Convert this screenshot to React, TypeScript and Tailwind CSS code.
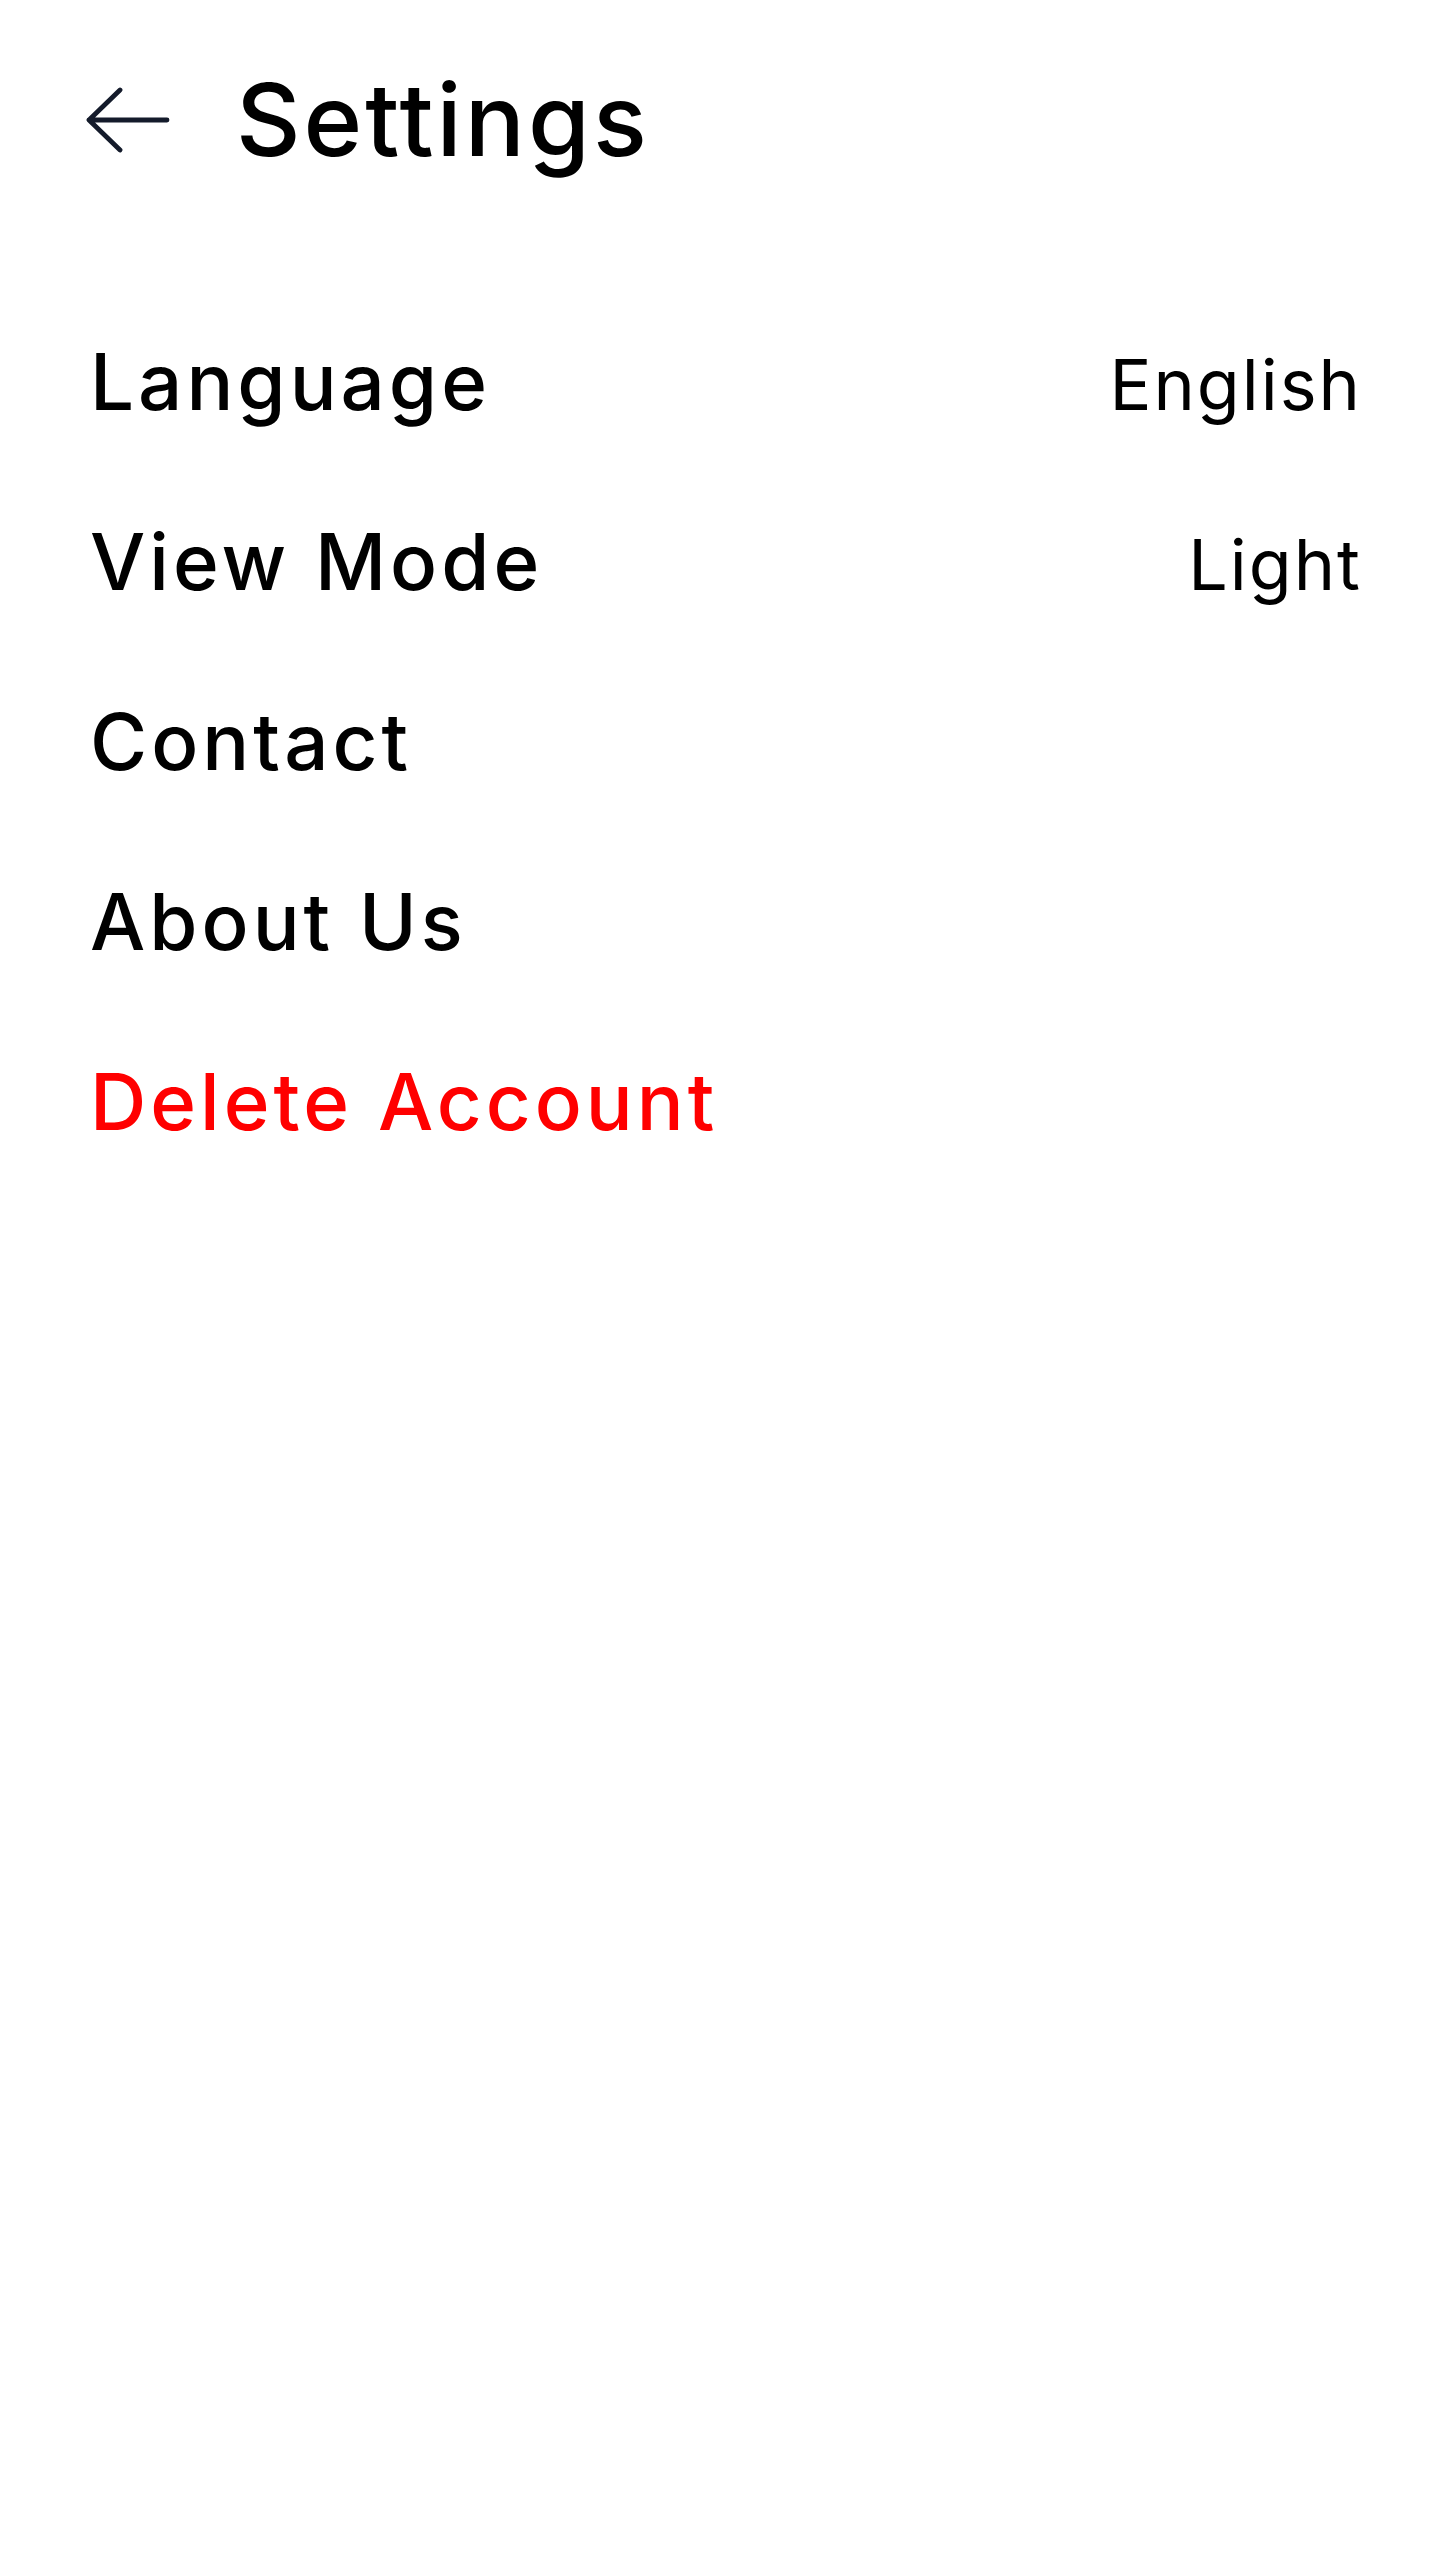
import type { ReactElement } from 'react'

type SettingRow = {
  label: string
  value?: string
  danger?: boolean
}

const rows: SettingRow[] = [
  { label: 'Language', value: 'English' },
  { label: 'View Mode', value: 'Light' },
  { label: 'Contact' },
  { label: 'About Us' },
  { label: 'Delete Account', danger: true },
]

function BackArrow(): ReactElement {
  return (
    <svg width="84" height="66" viewBox="0 0 84 66" fill="none" aria-hidden="true">
      <path
        d="M3 33H81M34 3 3 33l31 30"
        stroke="#141b2b"
        strokeWidth="4.8"
        strokeLinecap="round"
        strokeLinejoin="round"
      />
    </svg>
  )
}

export default function App(): ReactElement {
  return (
    <div className="min-h-screen w-full bg-white font-['Inter','Noto_Sans',sans-serif] text-black">
      <header className="flex h-[240px] items-center pl-[86px]">
        <button type="button" className="flex items-center" aria-label="Back">
          <BackArrow />
        </button>
        <h1 className="ml-[66px] text-[100px] font-medium leading-none tracking-[3px]">Settings</h1>
      </header>

      <ul className="mt-[52px] pl-[90px] pr-[78px]">
        {rows.map((row) => (
          <li key={row.label} className="flex h-[180px] items-baseline justify-between leading-[180px]">
            <span
              className={
                row.danger
                  ? 'text-[78px] font-medium tracking-[4px] text-[#ff0000]'
                  : 'text-[78px] font-medium tracking-[4px] text-black'
              }
            >
              {row.label}
            </span>
            {row.value ? (
              <span className="text-[70px] font-normal tracking-[2px] text-black">{row.value}</span>
            ) : null}
          </li>
        ))}
      </ul>
    </div>
  )
}
